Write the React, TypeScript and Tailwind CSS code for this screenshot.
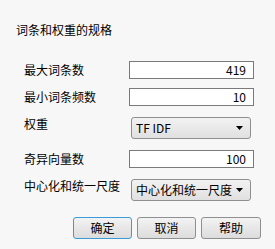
import React from "react";

const font = { fontFamily: '"Noto Sans CJK SC", "Noto Sans", sans-serif' };

function NumInput({ value, top }: { value: string; top: string }) {
  return (
    <div className={`ml-[129px] ${top} h-[18px] w-[125px] border border-[#7a7a7a] bg-white flex items-center justify-end pr-[7px] text-[12px] text-black`}>
      {value}
    </div>
  );
}

function Select({ value }: { value: string }) {
  return (
    <div className="ml-[131px] h-[22px] w-[120px] rounded-[3px] border border-[#8e8f8f] bg-gradient-to-b from-[#f2f2f2] to-[#e0e0e0] flex items-center justify-between pl-[4px] pr-[7px] text-[12px] text-black">
      <span>{value}</span>
      <svg width="7" height="4" viewBox="0 0 7 4">
        <path d="M0 0 L7 0 L3.5 4 Z" fill="#000" />
      </svg>
    </div>
  );
}

function Row({ label, children, select }: { label: string; children: React.ReactNode; select?: boolean }) {
  return (
    <div className="relative">
      <div className={`absolute left-[24px] text-[12px] text-black leading-[12px] ${select ? "top-[1px]" : "top-[3px]"}`}>
        {label}
      </div>
      {children}
    </div>
  );
}

export default function App() {
  const btn =
    "h-[22px] w-[59px] rounded-[3px] bg-gradient-to-b from-[#f3f3f3] to-[#dcdcdc] text-[12px] text-black flex items-center justify-center";
  return (
    <div style={font} className="w-[275px] h-[249px] bg-[#f7f7f7] overflow-hidden">
      <div className="pt-[24px] pl-[16px] text-[12px] leading-[12px] text-black">词条和权重的规格</div>
      <div className="mt-[25px]">
        <Row label="最大词条数">
          <NumInput value="419" top="" />
        </Row>
      </div>
      <div className="mt-[9px]">
        <Row label="最小词条频数">
          <NumInput value="10" top="" />
        </Row>
      </div>
      <div className="mt-[11px]">
        <Row label="权重" select>
          <Select value="TF IDF" />
        </Row>
      </div>
      <div className="mt-[11px]">
        <Row label="奇异向量数">
          <NumInput value="100" top="" />
        </Row>
      </div>
      <div className="mt-[11px]">
        <Row label="中心化和统一尺度" select>
          <Select value="中心化和统一尺度" />
        </Row>
      </div>
      <div className="mt-[16px] flex gap-[5px] pl-[73px]">
        <button className={`${btn} border border-[#3c9ad6]`}>确定</button>
        <button className={`${btn} border border-[#8e8f8f]`}>取消</button>
        <button className={`${btn} border border-[#8e8f8f] w-[60px]`}>帮助</button>
      </div>
    </div>
  );
}
